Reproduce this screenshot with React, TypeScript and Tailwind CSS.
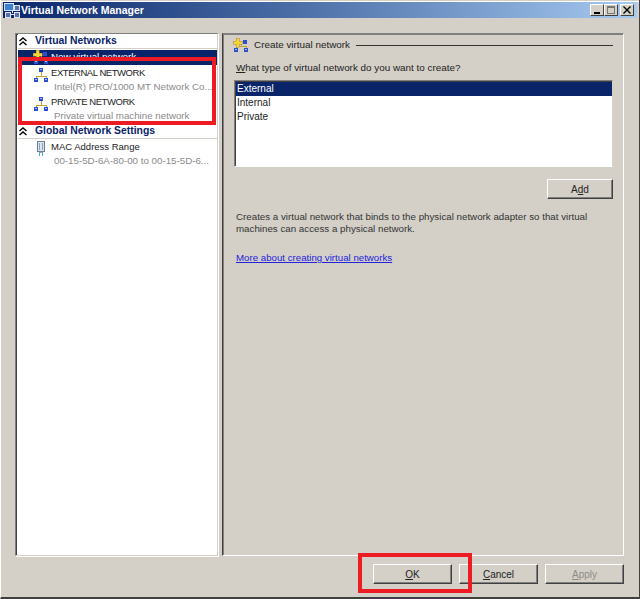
const FONT = "font-['Liberation_Sans',Arial,sans-serif]";

function NetworkIcon({ plus = false }: { plus?: boolean }) {
  return (
    <svg width="16" height="16" viewBox="0 0 16 16" shapeRendering="crispEdges" className="shrink-0">
      <path d="M8 5v4M3 12V9.5h10V12" stroke="#c9a23a" fill="none" />
      {plus ? (
        <>
          <path d="M3 1h3v3h3v3H6v3H3V7H0V4h3z" fill="#f5d53c" stroke="#b08a1c" strokeWidth="0.5" />
          <rect x="10" y="3" width="4" height="4" fill="#2a4fd0" />
        </>
      ) : (
        <>
          <rect x="6" y="1" width="4" height="4" fill="#2a4fd0" />
          <rect x="7" y="2" width="2" height="1" fill="#9fc0f0" />
        </>
      )}
      <rect x="1" y="11" width="4" height="4" fill="#2a4fd0" />
      <rect x="2" y="12" width="2" height="1" fill="#9fc0f0" />
      <rect x="11" y="11" width="4" height="4" fill="#2a4fd0" />
      <rect x="12" y="12" width="2" height="1" fill="#9fc0f0" />
    </svg>
  );
}

function TitleIcon() {
  return (
    <svg width="16" height="16" viewBox="0 0 16 16" shapeRendering="crispEdges" className="shrink-0">
      <rect x="0" y="1" width="9" height="7" fill="#3f7fd0" stroke="#cfe0f5" />
      <path d="M8 8v3M4 12h8" stroke="#dfe6f2" fill="none" />
      <rect x="1" y="10" width="5" height="5" fill="#5a6fae" stroke="#dfe6f2" />
      <rect x="10" y="10" width="5" height="5" fill="#5a6fae" stroke="#dfe6f2" />
      <rect x="10" y="3" width="5" height="5" fill="#5a6fae" stroke="#dfe6f2" />
    </svg>
  );
}

function Chevrons() {
  return (
    <svg width="8" height="9" viewBox="0 0 8 9" className="shrink-0 -ml-[1px] mr-[1px]">
      <path d="M0.5 4l3.5-3L7.5 4M0.5 8l3.5-3L7.5 8" stroke="#000" strokeWidth="1.4" fill="none" />
    </svg>
  );
}

function MacIcon() {
  return (
    <svg width="10" height="16" viewBox="0 0 10 16" shapeRendering="crispEdges" className="shrink-0">
      <rect x="1.5" y="0.5" width="7" height="10" fill="#d9e4ee" stroke="#6d7f90" />
      <rect x="3" y="2" width="1" height="7" fill="#8ea3b5" />
      <rect x="6" y="2" width="1" height="7" fill="#8ea3b5" />
      <rect x="3" y="11" width="4" height="1" fill="#8ea3b5" />
      <rect x="3" y="12" width="1" height="3" fill="#3fa9e0" />
      <rect x="6" y="12" width="1" height="3" fill="#3fa9e0" />
    </svg>
  );
}

function SectionHead({ label }: { label: string }) {
  return (
    <div className="flex items-center h-[15px] pl-[2px] gap-[7px] bg-white border-b border-[#d4d0c8]">
      <Chevrons />
      <span className="font-bold text-[#0a246a] text-[10.4px] leading-none mt-[1px]">{label}</span>
    </div>
  );
}

function TreeItem({ title, sub, icon, caps = false }: { title: string; sub: string; icon: React.ReactNode; caps?: boolean }) {
  return (
    <div className="h-[29px] flex items-start pl-[15px] gap-[3px]">
      <div className="w-[15px] flex justify-center pt-[1px]">{icon}</div>
      <div className="min-w-0 flex-1 text-[9.75px] leading-[14px]">
        <div className={`text-[#222] whitespace-nowrap ${caps ? "text-[9.5px] tracking-[-0.45px]" : "text-[9.5px]"}`}>{title}</div>
        <div className="text-[#8a8a8a] pl-[3px] whitespace-nowrap">{sub}</div>
      </div>
    </div>
  );
}

function WinButton({ children, disabled = false, wide = "w-[79px]" }: { children: React.ReactNode; disabled?: boolean; wide?: string }) {
  return (
    <div
      className={`${wide} h-[20px] flex items-center justify-center text-[10px] bg-[#d4d0c8] border border-t-white border-l-white border-r-[#404040] border-b-[#404040] shadow-[inset_-1px_-1px_0_#808080] ${disabled ? "text-[#8f8c85]" : "text-[#222]"}`}
    >
      {children}
    </div>
  );
}

function CaptionButton({ children }: { children: React.ReactNode }) {
  return (
    <div className="w-[14px] h-[12px] flex items-center justify-center bg-[#d4d0c8] border border-t-white border-l-white border-r-[#404040] border-b-[#404040]">
      {children}
    </div>
  );
}

export default function App() {
  return (
    <div className={`${FONT} relative w-[640px] h-[599px] overflow-hidden bg-[#d4d0c8] flex flex-col border-l border-l-white border-b-2 border-b-[#404040] border-r border-r-[#404040] text-[#222]`}>
      <div className="h-[2px] border-b border-b-white" />

      {/* title bar */}
      <div className="h-[16px] ml-[2px] mr-[2px] flex items-center pl-[1px] pr-[3px] bg-gradient-to-r from-[#0a246a] to-[#a6caf0]">
        <TitleIcon />
        <span className="ml-[1px] text-white font-bold text-[10.5px] leading-none">Virtual Network Manager</span>
        <div className="ml-auto flex items-center">
          <CaptionButton>
            <div className="w-[6px] h-[2px] bg-black mt-[5px]" />
          </CaptionButton>
          <CaptionButton>
            <div className="w-[8px] h-[8px] border border-[#777] border-t-2" />
          </CaptionButton>
          <div className="ml-[2px]">
            <CaptionButton>
              <svg width="8" height="8" viewBox="0 0 8 8">
                <path d="M0.5 0.5l7 7M7.5 0.5l-7 7" stroke="#000" strokeWidth="1.4" />
              </svg>
            </CaptionButton>
          </div>
        </div>
      </div>

      {/* panes */}
      <div className="mt-[15px] ml-[14px] flex gap-[4px] h-[523px]">
        <div className="w-[203px] bg-white border border-t-[#808080] border-l-[#808080] border-r-[#d4d0c8] border-b-[#d4d0c8] shadow-[1px_1px_0_#fff,inset_1px_1px_0_#404040] pl-[2px]">
          <SectionHead label="Virtual Networks" />
          <div className="h-[15px] mt-[1px] bg-[#0a246a] overflow-hidden flex pl-[15px] gap-[3px]">
            <div className="w-[15px] flex justify-center -mt-[1px]">
              <NetworkIcon plus />
            </div>
            <span className="text-white text-[9.75px] leading-[14px]">New virtual network</span>
          </div>
          <div className="pt-[1px]">
            <TreeItem caps title="EXTERNAL NETWORK" sub="Intel(R) PRO/1000 MT Network Co..." icon={<NetworkIcon />} />
            <TreeItem caps title="PRIVATE NETWORK" sub="Private virtual machine network" icon={<NetworkIcon />} />
          </div>
          <SectionHead label="Global Network Settings" />
          <div className="pt-[1px]">
            <TreeItem title="MAC Address Range" sub="00-15-5D-6A-80-00 to 00-15-5D-6..." icon={<MacIcon />} />
          </div>
        </div>

        <div className="w-[402px] border border-t-[#808080] border-l-[#404040] border-r-white border-b-white shadow-[inset_1px_1px_0_#808080] pl-[13px] pr-[10px] pt-[3px]">
          <div className="flex items-center h-[16px] -ml-[3px]">
            <NetworkIcon plus />
            <span className="ml-[5px] text-[9.9px]">Create virtual network</span>
            <div className="ml-[6px] flex-1 h-px bg-[#333]" />
          </div>

          <p className="mt-[8px] text-[9.9px] leading-[14px] whitespace-nowrap">
            <span className="underline">W</span>hat type of virtual network do you want to create?
          </p>

          <div className="mt-[5px] -ml-[2px] h-[87px] bg-white border border-t-[#808080] border-l-[#808080] border-r-[#d4d0c8] border-b-white text-[10px] leading-[14px] pt-[1px] pl-[1px] shadow-[inset_1px_1px_0_#404040]">
            <div className="h-[14px] bg-[#0a246a] text-white pl-[1px]">External</div>
            <div className="pl-[1px]">Internal</div>
            <div className="pl-[1px]">Private</div>
          </div>

          <div className="mt-[12px] flex justify-end">
            <WinButton wide="w-[66px]">
              <span>
                A<span className="underline">d</span>d
              </span>
            </WinButton>
          </div>

          <p className="mt-[12px] text-[9.75px] leading-[12px] text-[#333] whitespace-nowrap">
            Creates a virtual network that binds to the physical network adapter so that virtual
            <br />
            machines can access a physical network.
          </p>

          <p className="mt-[16px] text-[9.7px] leading-[14px] text-[#2222dd] underline">More about creating virtual networks</p>
        </div>
      </div>

      {/* footer buttons */}
      <div className="mt-[8px] flex justify-end gap-[7px] pr-[15px]">
        <WinButton>
          <span>
            <span className="underline">O</span>K
          </span>
        </WinButton>
        <WinButton>
          <span>
            <span className="underline">C</span>ancel
          </span>
        </WinButton>
        <WinButton disabled>
          <span>
            <span className="underline">A</span>pply
          </span>
        </WinButton>
      </div>

      {/* red annotation boxes */}
      <div className="absolute left-[17px] top-[57px] w-[198px] h-[68px] border-[4px] border-[#ed1c24]" />
      <div className="absolute left-[357px] top-[553px] w-[114px] h-[40px] border-[4px] border-[#ed1c24]" />
    </div>
  );
}
